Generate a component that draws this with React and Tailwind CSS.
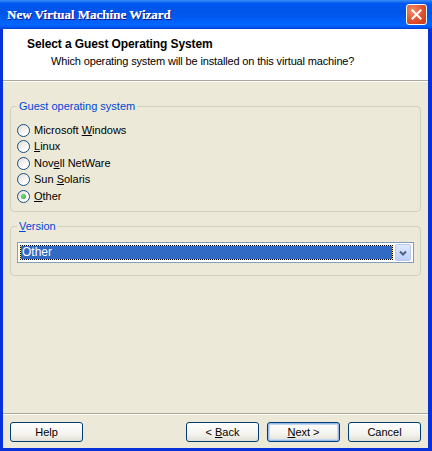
import React, { useState } from "react";

const font = { fontFamily: '"Liberation Sans", Arial, sans-serif' };

const Radio = ({ checked, children }) => (
  <div className="flex items-center h-[16.5px]">
    <span className="w-[13px] h-[13px] rounded-full border border-[#1c5180] bg-[linear-gradient(135deg,#dcd9d0,#ffffff_70%)] flex items-center justify-center">
      {checked && (
        <span className="w-[5px] h-[5px] rounded-full bg-[radial-gradient(circle_at_40%_40%,#7ee07e,#21a121)]" />
      )}
    </span>
    <span className="ml-[4px] text-[11px] text-black leading-none">{children}</span>
  </div>
);

const GroupBox = ({ label, className, children }) => (
  <div className={"relative border border-[#d0d0bf] rounded-[4px] " + className}>
    <span className="absolute -top-[7px] left-[6px] bg-[#ece9d8] px-[2px] text-[11px] leading-[13px] text-[#0046d5]">
      {label}
    </span>
    {children}
  </div>
);

const Button = ({ children, primary }) => (
  <button
    className={
      "w-[73px] h-[20px] rounded-[3px] border border-[#003c74] text-[11px] text-black leading-none bg-[linear-gradient(to_bottom,#ffffff,#f4f3ee_60%,#e3e1d6)] " +
      (primary ? "shadow-[inset_0_0_0_1px_#98b8ea,inset_0_0_0_2px_#c3d7f8]" : "")
    }
  >
    {children}
  </button>
);

export default function App() {
  const [os] = useState("Other");
  return (
    <div className="w-[432px] h-[451px] flex flex-col bg-[#0831d9] overflow-hidden" style={font}>
      {/* title bar */}
      <div className="h-[29px] shrink-0 flex items-center justify-between pl-[7px] pr-[5px] bg-[linear-gradient(to_bottom,#3a8cf8,#0058ee_12%,#0054e8_45%,#0066ff_85%,#005bf5_92%,#003dd7)]">
        <span
          className="text-white font-bold text-[13px] [text-shadow:1px_1px_#0f1089,0.4px_0_#fff]"
          style={{ fontFamily: '"Liberation Serif", "Times New Roman", serif' }}
        >
          New Virtual Machine Wizard
        </span>
        <span className="w-[21px] h-[21px] rounded-[3px] border border-white bg-[radial-gradient(circle_at_30%_30%,#f0906a,#e0502b_55%,#c63a16)] flex items-center justify-center">
          <svg width="11" height="11" viewBox="0 0 11 11">
            <path d="M1.5 1.5L9.5 9.5M9.5 1.5L1.5 9.5" stroke="#fff" strokeWidth="2" strokeLinecap="square" />
          </svg>
        </span>
      </div>

      <div className="flex-1 ml-[3px] mr-[4px] mb-[3px] flex flex-col bg-[#ece9d8]">
        {/* header */}
        <div className="h-[52px] shrink-0 bg-white border-b border-[#aca899] pl-[24px] pt-[8px]">
          <div className="text-[12px] font-bold text-black leading-[14px] tracking-[-0.1px]">Select a Guest Operating System</div>
          <div className="text-[11px] text-black leading-[14px] mt-[3px] pl-[24px] tracking-[-0.15px]">
            Which operating system will be installed on this virtual machine?
          </div>
        </div>
        <div className="h-px bg-white" />

        <div className="flex-1 flex flex-col px-[7px]">
          <GroupBox label="Guest operating system" className="mt-[24px] h-[106px] pl-[6px] pt-[15px]">
            <Radio>
              Microsoft <u>W</u>indows
            </Radio>
            <Radio>
              <u>L</u>inux
            </Radio>
            <Radio>
              Nov<u>e</u>ll NetWare
            </Radio>
            <Radio>
              Sun <u>S</u>olaris
            </Radio>
            <Radio checked={os === "Other"}>
              <u>O</u>ther
            </Radio>
          </GroupBox>

          <GroupBox label={<span><u>V</u>ersion</span>} className="mt-[14px] h-[50px] pl-[6px] pt-[15px] pr-[6px]">
            <div className="h-[21px] border border-[#7f9db9] bg-white flex items-center p-[2px]">
              <div className="flex-1 h-[15px] bg-[#ffe27a]">
                <div className="h-full border border-dotted border-black bg-[#316ac5] bg-clip-padding text-white text-[12px] leading-[13px] pl-[1px]">
                  Other
                </div>
              </div>
              <div className="w-[16px] h-[17px] ml-[2px] rounded-[2px] border border-[#b9c9ef] bg-[linear-gradient(to_bottom,#e0e8fd,#bccefa)] flex items-center justify-center">
                <svg width="8" height="6" viewBox="0 0 8 6">
                  <path d="M1 1.5L4 4.5L7 1.5" stroke="#4d6185" strokeWidth="2" fill="none" />
                </svg>
              </div>
            </div>
          </GroupBox>
          <div className="flex-1" />
        </div>

        {/* footer */}
        <div className="h-px bg-[#aca899]" />
        <div className="h-px bg-white" />
        <div className="h-[33px] shrink-0 flex items-start px-[7px] pt-[7px]">
          <Button>Help</Button>
          <div className="flex-1" />
          <div className="flex gap-[8px]">
            <Button>
              &lt; <u>B</u>ack
            </Button>
            <Button primary>
              <u>N</u>ext &gt;
            </Button>
            <Button>Cancel</Button>
          </div>
        </div>
      </div>
    </div>
  );
}
